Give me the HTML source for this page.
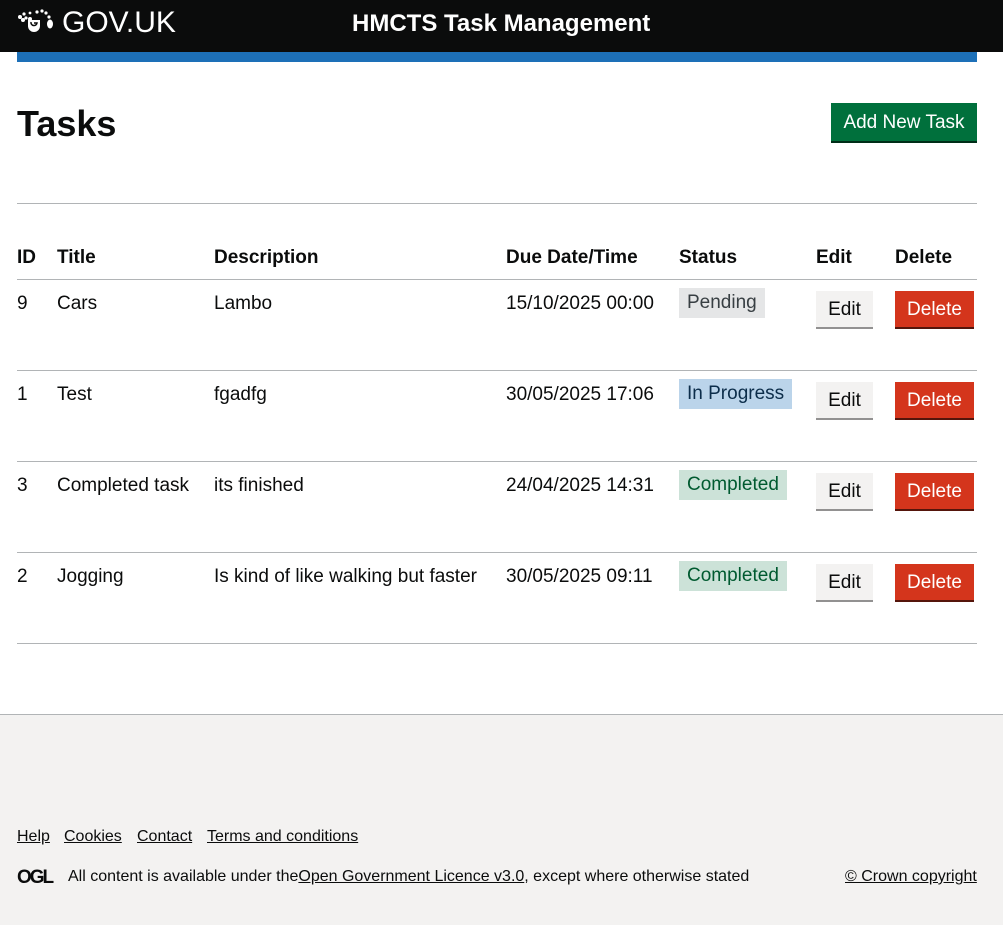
<!DOCTYPE html>
<html><head><meta charset="utf-8"><style>
*{box-sizing:border-box;margin:0;padding:0}
body{width:1003px;height:925px;font-family:"Liberation Sans",Arial,sans-serif;color:#0b0c0c;background:#fff;position:relative;overflow:hidden}
.hdr{position:absolute;left:0;top:0;width:1003px;height:52px;background:#0b0c0c;color:#fff}
.logo{position:absolute;left:62px;top:6px;font-size:30px;letter-spacing:0}
.title{position:absolute;left:352px;top:10px;font-size:24px;font-weight:bold}
.blue{position:absolute;left:17px;top:52px;width:960px;height:10px;background:#1d70b8}
h1{position:absolute;left:17px;top:103px;font-size:36px;font-weight:bold}
.add{position:absolute;left:831px;top:103px;width:146px;height:38px;background:#00703c;color:#fff;font-size:19px;line-height:40px;text-align:center;box-shadow:0 2px 0 #002d18}
.hr{position:absolute;left:17px;width:960px;height:1px;background:#b1b4b6}
.t{position:absolute;font-size:19px}
.b{font-weight:bold}
.tag{position:absolute;font-size:19px;padding:0 8px;height:30px;line-height:30px}
.btn{position:absolute;height:36px;line-height:38px;font-size:19px;text-align:center}
.edit{width:57px;background:#f3f2f1;box-shadow:0 2px 0 #929191}
.del{width:79px;background:#d4351c;color:#fff;box-shadow:0 2px 0 #55150b}
.foot{position:absolute;left:0;top:714px;width:1003px;height:211px;background:#f3f2f1;border-top:1px solid #b1b4b6}
.foot a{color:#0b0c0c;text-decoration:underline;font-size:16px;position:absolute}
</style></head><body>
<div class="hdr">
<svg style="position:absolute;left:16px;top:9px" width="38" height="24" viewBox="0 0 38 24"><g fill="#fff"><circle cx="4" cy="8" r="2"/><circle cx="8" cy="5" r="1.6"/><circle cx="10" cy="9" r="1.6"/><circle cx="7" cy="11" r="2"/><circle cx="21" cy="3" r="1.6"/><circle cx="26" cy="2" r="1.6"/><circle cx="30" cy="4" r="1.6"/><circle cx="33" cy="8" r="1.6"/><circle cx="14" cy="4" r="1.4"/><path d="M12 11h12v6a6 6 0 0 1-12 0z"/><ellipse cx="34" cy="15" rx="3" ry="4.5"/><ellipse cx="14" cy="10" rx="2" ry="2"/></g><path d="M15 13a3 3 0 1 0 6 1h-3" stroke="#0b0c0c" stroke-width="1.5" fill="none"/></svg>
<div class="logo">GOV.UK</div>
<div class="title">HMCTS Task Management</div>
</div>
<div class="blue"></div>
<h1>Tasks</h1>
<div class="add">Add New Task</div>
<div class="hr" style="top:203px"></div>
<div class="t b" style="left:17px;top:247px">ID</div>
<div class="t b" style="left:57px;top:247px">Title</div>
<div class="t b" style="left:214px;top:247px">Description</div>
<div class="t b" style="left:506px;top:247px">Due Date/Time</div>
<div class="t b" style="left:679px;top:247px">Status</div>
<div class="t b" style="left:816px;top:247px">Edit</div>
<div class="t b" style="left:895px;top:247px">Delete</div>
<div class="hr" style="top:279px"></div>

<div class="t" style="left:17px;top:293px">9</div><div class="t" style="left:57px;top:293px">Cars</div><div class="t" style="left:214px;top:293px">Lambo</div><div class="t" style="left:506px;top:293px">15/10/2025 00:00</div>
<div class="tag" style="left:679px;top:288px;background:#e5e6e7;color:#383f43">Pending</div>
<div class="btn edit" style="left:816px;top:291px">Edit</div><div class="btn del" style="left:895px;top:291px">Delete</div>
<div class="hr" style="top:370px"></div>

<div class="t" style="left:17px;top:384px">1</div><div class="t" style="left:57px;top:384px">Test</div><div class="t" style="left:214px;top:384px">fgadfg</div><div class="t" style="left:506px;top:384px">30/05/2025 17:06</div>
<div class="tag" style="left:679px;top:379px;background:#bbd4ea;color:#0c2d4a">In Progress</div>
<div class="btn edit" style="left:816px;top:382px">Edit</div><div class="btn del" style="left:895px;top:382px">Delete</div>
<div class="hr" style="top:461px"></div>

<div class="t" style="left:17px;top:475px">3</div><div class="t" style="left:57px;top:475px">Completed task</div><div class="t" style="left:214px;top:475px">its finished</div><div class="t" style="left:506px;top:475px">24/04/2025 14:31</div>
<div class="tag" style="left:679px;top:470px;background:#cce2d8;color:#005a30">Completed</div>
<div class="btn edit" style="left:816px;top:473px">Edit</div><div class="btn del" style="left:895px;top:473px">Delete</div>
<div class="hr" style="top:552px"></div>

<div class="t" style="left:17px;top:566px">2</div><div class="t" style="left:57px;top:566px">Jogging</div><div class="t" style="left:214px;top:566px">Is kind of like walking but faster</div><div class="t" style="left:506px;top:566px">30/05/2025 09:11</div>
<div class="tag" style="left:679px;top:561px;background:#cce2d8;color:#005a30">Completed</div>
<div class="btn edit" style="left:816px;top:564px">Edit</div><div class="btn del" style="left:895px;top:564px">Delete</div>
<div class="hr" style="top:643px"></div>

<div class="foot">
<a style="left:17px;top:113px">Help</a><a style="left:64px;top:113px">Cookies</a><a style="left:137px;top:113px">Contact</a><a style="left:207px;top:113px">Terms and conditions</a>
<div style="position:absolute;left:17px;top:152px;font-size:19px;font-weight:900;letter-spacing:-2px">OGL</div>
<div style="position:absolute;left:68px;top:153px;font-size:16px">All content is available under the<span style="text-decoration:underline">Open Government Licence v3.0</span>, except where otherwise stated</div>
<a style="left:845px;top:153px">© Crown copyright</a>
</div>
</body></html>
